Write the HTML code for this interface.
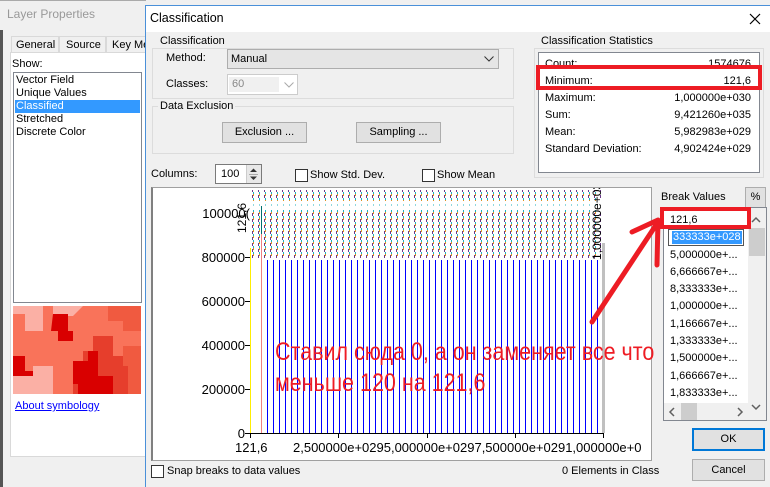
<!DOCTYPE html>
<html><head><meta charset="utf-8"><style>
*{margin:0;padding:0;box-sizing:border-box}
body{width:770px;height:487px;overflow:hidden;background:#f0f0f0;font-family:"Liberation Sans","DejaVu Sans",sans-serif;font-size:11px;color:#000;position:relative}
.a{position:absolute;white-space:nowrap}
.grp{position:absolute;border:1px solid #dcdcdc}
.btn{position:absolute;background:#e1e1e1;border:1px solid #adadad;text-align:center}
.cb{position:absolute;width:13px;height:13px;border:1px solid #333;background:#fff}
</style></head><body>
<div class="a" style="left:0;top:0;width:146px;height:487px;background:#f0f0f0;border-top:1px solid #aaa"></div>
<div class="a" style="left:0;top:30px;width:3px;height:457px;background:#555"></div>
<div class="a" style="left:7px;top:7px;color:#999;font-size:12px">Layer Properties</div>
<div class="a" style="left:10px;top:52px;width:136px;height:405px;background:#fff;border:1px solid #d9d9d9"></div>
<div class="a" style="left:11px;top:36px;width:48px;height:17px;background:#f0f0f0;border:1px solid #d9d9d9;padding:2px 4px">General</div>
<div class="a" style="left:59px;top:36px;width:47px;height:17px;background:#f0f0f0;border:1px solid #d9d9d9;padding:2px 6px">Source</div>
<div class="a" style="left:106px;top:36px;width:40px;height:17px;background:#f0f0f0;border:1px solid #d9d9d9;padding:2px 5px">Key Me</div>
<div class="a" style="left:12px;top:58px">Show:</div>
<div class="a" style="left:13px;top:72px;width:129px;height:231px;border:1px solid #828790;background:#fff"></div>
<div class="a" style="left:15px;top:100px;width:125px;height:13px;background:#3399ff"></div>
<div class="a" style="left:16px;top:74px;line-height:13px">Vector Field<br>Unique Values<br><span style="color:#fff">Classified</span><br>Stretched<br>Discrete Color</div>
<svg class="a" style="left:13px;top:306px" width="128" height="88" viewBox="0 0 128 88">
<rect width="128" height="88" fill="#f9735a"/>
<path d="M0 0H128V20H110V0H70L60 10H40V0Z" fill="#fbb0a5"/>
<path d="M0 0H30V25H12V8H0Z" fill="#fbb0a5"/>
<path d="M40 8H55V25H60V35H45V25H38Z" fill="#d90000"/>
<path d="M95 0H128V25H110V15H95Z" fill="#f05a40"/>
<path d="M80 30H100V50H120V88H60V60H70V45H80Z" fill="#e63e2c"/>
<path d="M75 45H85V70H100V88H65V78H60V55H75Z" fill="#d90000"/>
<path d="M0 50H12V65H20V75H0Z" fill="#d90000"/>
<path d="M0 70H20V60H40V88H0Z" fill="#fbb0a5"/>
<path d="M110 40H128V88H115V60H110Z" fill="#f05a40"/>
</svg>
<div class="a" style="left:15px;top:400px;color:#00f;text-decoration:underline">About symbology</div>
<div class="a" style="left:145px;top:5px;width:625px;height:482px;background:#f0f0f0;border-left:1px solid #4a90d9;border-top:1px solid #4a90d9"></div>
<div class="a" style="left:146px;top:6px;width:624px;height:26px;background:#fff"></div>
<div class="a" style="left:150px;top:11px;font-size:12.5px">Classification</div>
<svg class="a" style="left:749px;top:13px" width="12" height="12"><path d="M1 1L11 11M11 1L1 11" stroke="#000" stroke-width="1.2"/></svg>
<div class="grp" style="left:152px;top:48px;width:362px;height:51px"></div>
<div class="a" style="left:158px;top:35px;background:#f0f0f0;padding:0 2px">Classification</div>
<div class="a" style="left:166px;top:52px">Method:</div>
<div class="a" style="left:227px;top:49px;width:272px;height:20px;background:#e5e5e5;border:1px solid #adadad;padding:3px 3px">Manual</div>
<svg class="a" style="left:484px;top:56px" width="10" height="6"><path d="M0.5 0.5L5 5L9.5 0.5" stroke="#333" fill="none"/></svg>
<div class="a" style="left:166px;top:78px">Classes:</div>
<div class="a" style="left:227px;top:74px;width:71px;height:21px;background:#fff;border:1px solid #ccc"></div>
<div class="a" style="left:229px;top:77px;width:50px;height:15px;background:#f0f0f0;color:#888;padding:1px 3px">60</div>
<svg class="a" style="left:284px;top:82px" width="10" height="6"><path d="M0.5 0.5L5 5L9.5 0.5" stroke="#aaa" fill="none"/></svg>
<div class="grp" style="left:152px;top:106px;width:362px;height:48px"></div>
<div class="a" style="left:158px;top:100px;background:#f0f0f0;padding:0 2px">Data Exclusion</div>
<div class="btn" style="left:222px;top:122px;width:85px;height:21px;padding-top:3px">Exclusion ...</div>
<div class="btn" style="left:356px;top:122px;width:85px;height:21px;padding-top:3px">Sampling ...</div>
<div class="a" style="left:151px;top:168px">Columns:</div>
<div class="a" style="left:215px;top:164px;width:47px;height:20px;background:#fff;border:1px solid #7a7a7a;padding:3px 5px">100</div>
<div class="a" style="left:246px;top:165px;width:15px;height:18px;background:#e8e8e8;border-left:1px solid #ccc"></div>
<svg class="a" style="left:249px;top:167px" width="9" height="15"><path d="M1 5L4.5 1.5L8 5Z M1 9.5L4.5 13L8 9.5Z" fill="#333"/><path d="M0 7.5H9" stroke="#aaa"/></svg>
<div class="cb" style="left:295px;top:169px"></div><div class="a" style="left:310px;top:169px">Show Std. Dev.</div>
<div class="cb" style="left:422px;top:169px"></div><div class="a" style="left:437px;top:169px">Show Mean</div>
<div class="grp" style="left:534px;top:48px;width:230px;height:130px"></div>
<div class="a" style="left:539px;top:35px;background:#f0f0f0;padding:0 2px">Classification Statistics</div>
<div class="a" style="left:538px;top:52px;width:222px;height:121px;background:#fff;border:1px solid #828790"></div>
<div class="a" style="left:545px;top:56px;line-height:17px">Count:<br>Minimum:<br>Maximum:<br>Sum:<br>Mean:<br>Standard Deviation:</div>
<div class="a" style="left:600px;top:56px;width:151px;line-height:17px;text-align:right">1574676<br>121,6<br>1,000000e+030<br>9,421260e+035<br>5,982983e+029<br>4,902424e+029</div>
<div class="a" style="left:536px;top:65px;width:226px;height:25px;border:4px solid #ed1c24"></div>
<div class="a" style="left:151px;top:187px;width:501px;height:274px;background:#fff;border:1px solid #a0a0a0;border-left:2px solid #808080"></div>
<div class="a" style="left:267px;top:260px;width:336px;height:173px;background:repeating-linear-gradient(90deg,#0000ff 0,#0000ff 1px,#ffffff 1px,#ffffff 6px)"></div>
<svg class="a" style="left:153px;top:188px" width="497" height="272">
<defs>
<pattern id="mk" x="98" y="0" width="6" height="6" patternUnits="userSpaceOnUse"><rect x="1" y="1" width="1" height="3" fill="#6b3a8a"/><rect x="2" y="0" width="1" height="2" fill="#e09020"/><rect x="2" y="4" width="1" height="2" fill="#20b0c0"/></pattern>
</defs>
<rect x="98" y="2" width="350" height="11" fill="url(#mk)"/>
<rect x="98" y="16" width="350" height="2" fill="url(#mk)" opacity="0.5"/>
<rect x="98" y="22" width="350" height="48" fill="url(#mk)"/>
<rect x="108" y="45" width="1" height="200" fill="#f08080"/>
<rect x="108" y="18" width="1" height="28" fill="#007070"/>
<rect x="97" y="60" width="1" height="185" fill="#ffee00"/>
<rect x="449" y="55" width="3" height="190" fill="#c0c0c0"/>
<path d="M97 245.5H450M97.5 245V250M185.5 245V250M274.5 245V250M362.5 245V250M450.5 245V250M92 245.5H97M92 201.5H97M92 157.5H97M92 113.5H97M92 69.5H97" stroke="#000" stroke-width="1" fill="none"/>
<g font-family="Liberation Sans,sans-serif" font-size="13" text-anchor="end">
<text x="97" y="30">100000(</text><text x="92" y="74">800000</text><text x="92" y="118">600000</text><text x="92" y="162">400000</text><text x="92" y="206">200000</text><text x="92" y="250">0</text>
</g>
<g font-family="Liberation Sans,sans-serif" font-size="13"><text x="82" y="264">121,6</text><text x="140" y="264">2,500000e+0295,000000e+0297,500000e+0291,000000e+0</text></g>
<text transform="translate(93,45) rotate(-90)" font-family="Liberation Sans,sans-serif" font-size="12">121,6</text>
<text transform="translate(448,72) rotate(-90)" font-family="Liberation Sans,sans-serif" font-size="12">1,000000e+03</text>
</svg>
<div class="a" style="left:661px;top:191px">Break Values</div>
<div class="btn" style="left:745px;top:187px;width:21px;height:21px;padding-top:3px;background:#e1e1e1">%</div>
<div class="a" style="left:663px;top:207px;width:104px;height:214px;background:#fff;border:1px solid #828790"></div>
<div class="a" style="left:748px;top:208px;width:18px;height:195px;background:#f0f0f0"></div>
<div class="a" style="left:749px;top:228px;width:16px;height:28px;background:#cdcdcd"></div>
<div class="a" style="left:664px;top:403px;width:102px;height:17px;background:#f0f0f0"></div>
<div class="a" style="left:681px;top:403px;width:16px;height:17px;background:#cdcdcd"></div>
<svg class="a" style="left:750px;top:215px" width="12" height="200"><path d="M2 7L6 3L10 7M2 190L6 194L10 190" stroke="#606060" stroke-width="1.5" fill="none"/></svg>
<svg class="a" style="left:667px;top:405px" width="80" height="14"><path d="M7 3L3 7L7 11M71 3L75 7L71 11" stroke="#606060" stroke-width="1.5" fill="none"/></svg>
<div class="a" style="left:668px;top:229px;width:76px;height:17px;border:1px solid #555"></div>
<div class="a" style="left:672px;top:231px;width:70px;height:13px;background:#3399ff"></div>
<div class="a" style="left:670px;top:212px;line-height:17.3px">121,6<br><span style="color:#fff;margin-left:3px">333333e+028</span><br>5,000000e+...<br>6,666667e+...<br>8,333333e+...<br>1,000000e+...<br>1,166667e+...<br>1,333333e+...<br>1,500000e+...<br>1,666667e+...<br>1,833333e+...</div>
<div class="a" style="left:660px;top:207px;width:91px;height:22px;border:4px solid #ed1c24"></div>
<div class="a" style="left:275px;top:337px;color:#ee1c24;font-size:25px;line-height:31px;transform:scaleX(0.86);transform-origin:0 0">Ставил сюда 0, а он заменяет все что<br>меньше 120 на 121,6</div>
<svg class="a" style="left:0;top:0" width="770" height="487"><path d="M592 322L658 222M632 232L658 220L657 265" stroke="#ed1c24" stroke-width="5" fill="none" stroke-linecap="round" stroke-linejoin="round"/></svg>
<div class="btn" style="left:692px;top:428px;width:73px;height:23px;border:2px solid #0078d7;padding-top:3px">OK</div>
<div class="btn" style="left:692px;top:459px;width:73px;height:22px;padding-top:4px">Cancel</div>
<div class="cb" style="left:151px;top:465px"></div><div class="a" style="left:167px;top:465px">Snap breaks to data values</div>
<div class="a" style="left:562px;top:465px">0 Elements in Class</div>
</body></html>
